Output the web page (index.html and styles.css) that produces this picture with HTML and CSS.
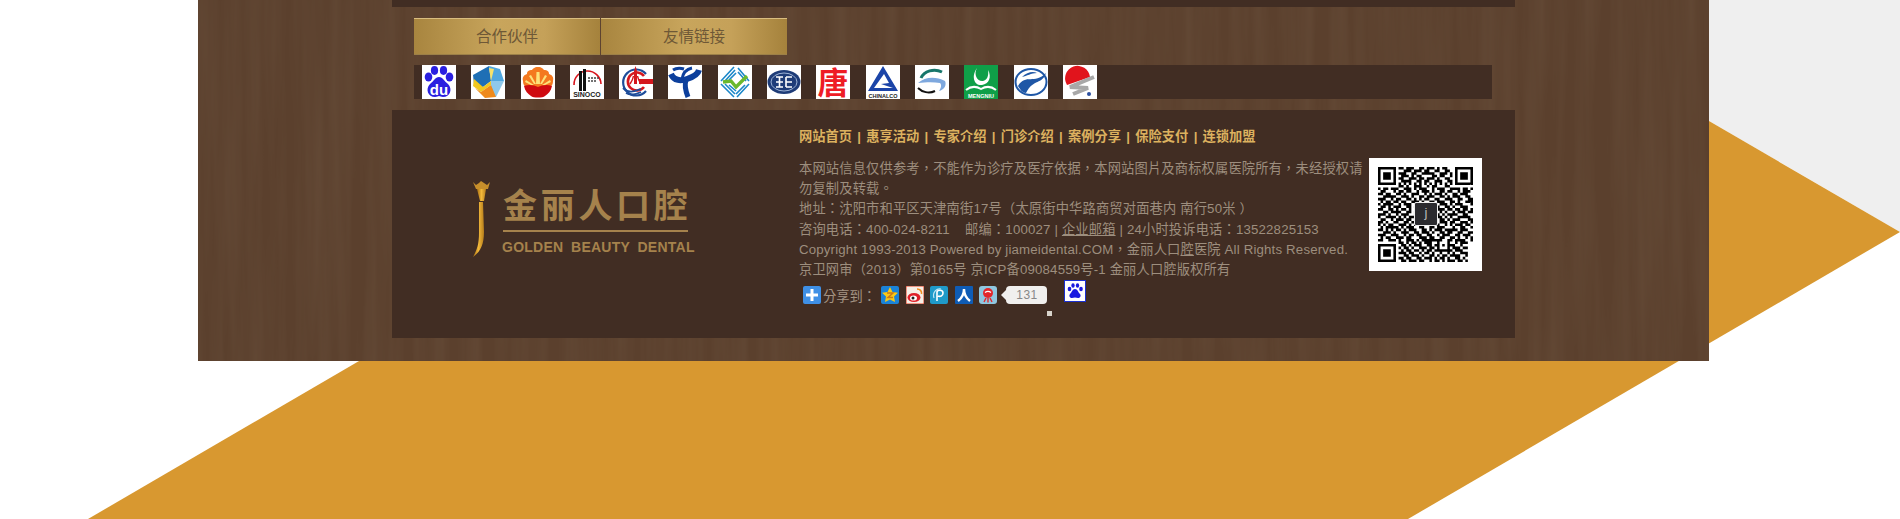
FILE: index.html
```html
<!DOCTYPE html>
<html lang="zh-CN">
<head>
    <meta charset="UTF-8">
    <meta name="viewport" content="width=device-width, initial-scale=1.0">
    <title>金丽人口腔</title>
    <link rel="stylesheet" href="styles.css">
</head>
<body>
    <div class="wood">
        <div class="top-strip"></div>

        <div class="tabs">
            <a class="tab">合作伙伴</a>
            <a class="tab">友情链接</a>
        </div>

        <div class="partners">
            <!-- baidu -->
            <svg class="logo" viewBox="0 0 34 34">
                <g fill="#2a1fe0">
                    <ellipse cx="6.500" cy="12" rx="3.800" ry="4.600"/>
                    <ellipse cx="12.500" cy="5.500" rx="3.600" ry="4.400"/>
                    <ellipse cx="21.500" cy="5.500" rx="3.600" ry="4.400"/>
                    <ellipse cx="27.500" cy="12" rx="3.800" ry="4.600"/>
                    <path d="M17 12c4 0 5 4 9 7 5 5 2 13-5 13-2 0-3-1-4-1s-2 1-4 1c-7 0-10-8-5-13 4-3 5-7 9-7z"/>
                </g>
                <text x="17" y="29.500" class="logo-du">du</text>
            </svg>
            <!-- cube -->
            <svg class="logo" viewBox="0 0 34 34">
                <path d="M2 10 18 1l2 15-8 6-9-3z" fill="#1e6fb5"/>
                <path d="M18 1l11 3 4 12-13 0z" fill="#4fa7e0"/>
                <path d="M20 16h13l-8 16-5-5z" fill="#8fc8ea"/>
                <path d="M3 14l9 8 8-6 0 4-10 7-8-6z" fill="#f2c81e"/>
                <path d="M4 23l6 4 10-7 5 12-11 1z" fill="#ef8a1c"/>
                <path d="M18 3l2 13 3-12z" fill="#f6e26a"/>
            </svg>
            <!-- petrochina -->
            <svg class="logo" viewBox="0 0 34 34">
                <path d="M17 2c-4 0-5 2-6 3-3 0-5 1-5 4-3 1-5 3-4 7 0 3 1 5 3 6h24c2-1 3-3 3-6 1-4-1-6-4-7 0-3-2-4-5-4-1-1-2-3-6-3z" fill="#f4791f"/>
                <path d="M15.500 7h3L19 19h-4zM8 11l2-1 5 9h-2zM26 11l-2-1-5 9h2zM4 17l1-2 8 5h-3zM30 17l-1-2-8 5h3z" fill="#fde27a"/>
                <path d="M3 21c5-2 10-1 14 1 4-2 9-3 14-1-1 5-4 8-7 10-2 2-12 2-14 0-3-2-6-5-7-10z" fill="#cf0a10"/>
            </svg>
            <!-- sinopec style -->
            <svg class="logo" viewBox="0 0 34 34">
                <path d="M4 20A13.500 13.500 0 1 1 31 19" fill="none" stroke="#d8141c" stroke-width="1.600"/>
                <path d="M9 6h3v21H9zM13 4h3v23h-3z" fill="#111"/>
                <path d="M18 13h11M18 16h9" stroke="#444" stroke-width="1.400" stroke-dasharray="2 1"/>
                <path d="M2 26h30v6H2z" fill="#fff"/>
                <text x="17" y="32" class="logo-tiny logo-tiny-big">SINOCO</text>
            </svg>
            <!-- cnooc -->
            <svg class="logo" viewBox="0 0 34 34">
                <path d="M27 9A13 13 0 1 0 27 26" fill="none" stroke="#1e4d9a" stroke-width="2.200"/>
                <path d="M25 11A9 9 0 1 0 25 22" fill="none" stroke="#d5181e" stroke-width="2.600"/>
                <path d="M15 19V6l1.500-5L18 6v13z" fill="#d5181e"/>
                <path d="M11 19c2-3 3-5 3.500-8M22 19c-2-3-3-5-3.500-8" fill="none" stroke="#d5181e" stroke-width="1.500"/>
                <path d="M4 23c6 6 12 3 18 1M7 28c5 3 11 1 15-1" fill="none" stroke="#1e4d9a" stroke-width="1.800"/>
                <rect x="20" y="14" width="14" height="5" fill="#d5181e"/>
            </svg>
            <!-- telecom -->
            <svg class="logo" viewBox="0 0 34 34" fill="none" stroke="#0c3f9c">
                <path d="M3 9c3 7 10 7 16 5 6-2 11-5 12-9" stroke-width="6"/>
                <path d="M24 3c-5 1-9 5-10 11" stroke-width="3"/>
                <path d="M18 15c-2 6 0 12 2 17" stroke-width="5"/>
                <path d="M5 5c3-2 8-2 11-1" stroke-width="3"/>
            </svg>
            <!-- mobile -->
            <svg class="logo" viewBox="0 0 34 34" fill="none">
                <g stroke="#1b87c9" stroke-width="1.600">
                    <path d="M3 16 16 2M7 16 17 5M11 15 18 8"/>
                    <path d="M20 3l11 13M20 7l8 9"/>
                    <path d="M3 19l13 13M7 19l10 10M11 20l7 6"/>
                    <path d="M31 19 19 32M27 20 18 29"/>
                </g>
                <path d="M5 17l8-1 5 6L29 11" stroke="#6ab82d" stroke-width="3.400"/>
            </svg>
            <!-- faw -->
            <svg class="logo" viewBox="0 0 34 34">
                <ellipse cx="17" cy="17" rx="16.500" ry="12" fill="#1e3c78"/>
                <ellipse cx="17" cy="17" rx="13" ry="9" fill="none" stroke="#9db3d6" stroke-width="1"/>
                <path d="M9 12h7M9 17h7M9 22h7M12.500 12v10M19 12v10M19 12h6M19 17h6M19 22h6" stroke="#fff" stroke-width="1.600"/>
            </svg>
            <!-- tang seal -->
            <svg class="logo" viewBox="0 0 34 34">
                <text x="17" y="29" class="logo-seal">唐</text>
            </svg>
            <!-- chinalco -->
            <svg class="logo" viewBox="0 0 34 34">
                <path d="M17 1 2 26h30zM18 9l5 9-8 1 12 4H8z" fill="#1b44a8" fill-rule="evenodd"/>
                <text x="17" y="32.500" class="logo-tiny">CHINALCO</text>
            </svg>
            <!-- swirl -->
            <svg class="logo" viewBox="0 0 34 34" fill="none">
                <path d="M6 13C9 6 19 3 27 7" stroke="#17766a" stroke-width="3"/>
                <path d="M3 18c7-6 17-7 27-2 2 4-1 9-6 10 2-3 3-6 1-8-6-1-13-1-22 0z" fill="#7ea8de"/>
                <path d="M3 23c4 4 11 6 17 3" stroke="#111" stroke-width="2"/>
            </svg>
            <!-- mengniu -->
            <svg class="logo logo-green" viewBox="0 0 34 34" fill="none">
                <path d="M13 3c-4 7 1 14 6 13 4-1 6-5 5-11 4 7 1 14-6 15-8 1-11-9-5-17z" fill="#fff"/>
                <path d="M2 25c5-4 10-4 15-1 5-3 10-3 15 1" stroke="#fff" stroke-width="2"/>
                <text x="17" y="32.500" class="logo-tiny logo-tiny-white">MENGNIU</text>
            </svg>
            <!-- blue swirl -->
            <svg class="logo" viewBox="0 0 34 34" fill="none">
                <ellipse cx="17" cy="17" rx="15.500" ry="13" stroke="#1f57a6" stroke-width="2"/>
                <path d="M4 21C12 8 20 20 32 8 28 20 20 13 12 28 8 28 6 24 4 21z" fill="#1f57a6"/>
                <path d="M8 12c5-5 11-6 15-4-6 0-10 3-15 4z" fill="#1f57a6"/>
            </svg>
            <!-- red sun -->
            <svg class="logo" viewBox="0 0 34 34" fill="none">
                <path d="M4 20A12.500 12.500 0 1 1 27 12z" fill="#e1141c"/>
                <path d="M31 12 7 22l18 1-15 6" stroke="#a8a8a8" stroke-width="4"/>
                <circle cx="26" cy="29" r="2" fill="#2b4fa0"/>
            </svg>
        </div>

        <div class="footer">
            <div class="brand">
                <svg class="brand-mark" viewBox="0 0 20 76">
                    <defs>
                        <linearGradient id="gold" x1="0" y1="0" x2="1" y2="0">
                            <stop offset="0" stop-color="#a86f12"/>
                            <stop offset="0.5" stop-color="#f2b83a"/>
                            <stop offset="1" stop-color="#b57d1c"/>
                        </linearGradient>
                    </defs>
                    <path d="M1 1l3 3 3-2 2-2 3 2 3 2 3-3-2 7H4z" fill="#c78f2b"/>
                    <path d="M5 8h9l-2 12h-4z" fill="url(#gold)"/>
                    <path d="M7 21h4l1 30c0 13-4 20-11 25 4-7 6-13 6-24z" fill="url(#gold)"/>
                </svg>
                <div class="brand-text">
                    <div class="brand-cn">金丽人口腔</div>
                    <div class="brand-en">GOLDEN BEAUTY DENTAL</div>
                </div>
            </div>

            <div class="info" lang="zh-Hant">
                <div class="info-nav">网站首页 | 惠享活动 | 专家介绍 | 门诊介绍 | 案例分享 | 保险支付 | 连锁加盟</div>
                <div class="info-text">
                    本网站信息仅供参考，不能作为诊疗及医疗依据，本网站图片及商标权属医院所有，未经授权请勿复制及转载。<br>
                    地址：沈阳市和平区天津南街17号（太原街中华路商贸对面巷内 南行50米 ）<br>
                    咨询电话：400-024-8211 &nbsp;&nbsp; 邮编：100027 | <u>企业邮箱</u> | 24小时投诉电话：13522825153<br>
                    Copyright 1993-2013 Powered by jiameidental.COM，金丽人口<u>腔</u>医院 All Rights Reserved.<br>
                    京卫网审（2013）第0165号 京ICP备09084559号-1 金丽人口腔版权所有
                </div>
                <div class="share">
                    <svg class="share-plus" viewBox="0 0 18 18">
                        <rect width="18" height="18" rx="2" fill="#3f90e6"/>
                        <path d="M9 3v12M3 9h12" stroke="#fff" stroke-width="3"/>
                    </svg>
                    <span class="share-label">分享到：</span>
                    <svg class="share-icon" viewBox="0 0 18 18">
                        <rect width="18" height="18" rx="2" fill="#1a83d8"/>
                        <path d="M9 1l2.500 5 5.500.8-4 3.800 1 5.400L9 13.500 4 16l1-5.400-4-3.800L6.500 6z" fill="#fbc914"/>
                        <path d="M6 7h6l-5 4.500h5" fill="none" stroke="#c9781a" stroke-width="1.500"/>
                    </svg>
                    <svg class="share-icon" viewBox="0 0 18 18">
                        <rect width="18" height="18" fill="#f6efe6" stroke="#e33b1e"/>
                        <ellipse cx="8" cy="11.500" rx="6.500" ry="4.500" fill="#df2029"/>
                        <ellipse cx="7.500" cy="12" rx="3.500" ry="2.600" fill="#fff"/>
                        <circle cx="7" cy="12" r="1.500" fill="#222"/>
                        <path d="M11 3c3 0 5 2 4.500 5" fill="none" stroke="#f08a1d" stroke-width="1.600"/>
                    </svg>
                    <svg class="share-icon" viewBox="0 0 18 18">
                        <rect width="18" height="18" rx="2" fill="#1f9ac9"/>
                        <path d="M7 15V6c0-2 6-3 6 1 0 3-3 4-5 3" fill="none" stroke="#fff" stroke-width="1.600"/>
                        <path d="M4 12C2 6 7 2 11 3" fill="none" stroke="#bfe6f5" stroke-width="1.200"/>
                    </svg>
                    <svg class="share-icon" viewBox="0 0 18 18">
                        <rect width="18" height="18" rx="1" fill="#0f5cb5"/>
                        <path d="M9 3c0 5-2 9-6 12M9 3c0 5 2 9 6 12" fill="none" stroke="#fff" stroke-width="2.400"/>
                    </svg>
                    <svg class="share-icon" viewBox="0 0 18 18">
                        <rect width="18" height="18" rx="3" fill="#8fc7e0"/>
                        <circle cx="9" cy="7" r="5" fill="#e3272b"/>
                        <path d="M6 6.500c2-1.500 4-1.500 6 0" stroke="#fff" stroke-width="1.400" fill="none"/>
                        <path d="M7 12l-2 4M9 12v4.500M11 12l2 4" stroke="#e3272b" stroke-width="1.400"/>
                    </svg>
                    <span class="share-count">131</span>
                    <svg class="share-paw" viewBox="0 0 22 22">
                        <rect x="0.500" y="0.500" width="21" height="21" fill="#fff" stroke="#1a2fd0"/>
                        <g fill="#1a1ae0">
                            <ellipse cx="5.500" cy="9" rx="1.800" ry="2.300"/>
                            <ellipse cx="9" cy="5.500" rx="1.700" ry="2.200"/>
                            <ellipse cx="13.500" cy="5.500" rx="1.700" ry="2.200"/>
                            <ellipse cx="17" cy="9" rx="1.800" ry="2.300"/>
                            <path d="M11 9c2.500 0 3 3 5 5 1.500 2 0 4-2 4-1 0-2-.5-3-.5s-2 .5-3 .5c-2 0-3.500-2-2-4 2-2 2.500-5 5-5z"/>
                        </g>
                    </svg>
                </div>
                <span class="tiny-mark"></span>
            </div>

            <div class="qr">
                <svg id="qr-code" class="qr-code" viewBox="0 0 37 37"></svg>
                <span class="qr-badge">j</span>
            </div>
        </div>
    </div>
    <script src="qr.js"></script>
</body>
</html>
```

FILE: styles.css
```css
html, body {
    margin: 0;
    height: 100%;
}
body {
    height: 519px;
    overflow: hidden;
    font-family: "Liberation Sans", "Noto Sans CJK SC", sans-serif;
    background: #fff url("data:image/svg+xml,%3Csvg xmlns='http://www.w3.org/2000/svg' width='1900' height='519'%3E%3Cpolygon points='1501,0 1900,0 1900,232' fill='%23efefef'/%3E%3Cpolygon points='1239,-152 1900,232 1408,519 88,519' fill='%23d89830'/%3E%3C/svg%3E") no-repeat 0 0;
}
.wood {
    margin-left: 198px;
    width: 1511px;
    height: 361px;
    box-sizing: border-box;
    padding: 0 194px;
    background: #5b402d url("data:image/svg+xml,%3Csvg xmlns='http://www.w3.org/2000/svg' width='1511' height='361'%3E%3Cfilter id='g' x='0' y='0' width='100%25' height='100%25'%3E%3CfeTurbulence type='fractalNoise' baseFrequency='0.06 0.003' numOctaves='4' seed='7'/%3E%3CfeColorMatrix values='0 0 0 0 0.2 0 0 0 0 0.13 0 0 0 0 0.08 0.4 0 0 0 -0.13'/%3E%3C/filter%3E%3Crect width='1511' height='361' filter='url(%23g)'/%3E%3C/svg%3E") no-repeat 0 0;
}
.top-strip {
    height: 7px;
    background: #412d23;
}

.tabs {
    display: flex;
    gap: 1px;
    margin: 11px 0 0 22px;
}
.tab {
    width: 186px;
    height: 37px;
    box-sizing: border-box;
    border-top: 1px solid #d9bd80;
    border-bottom: 1px solid #9c8048;
    line-height: 35px;
    text-align: center;
    font-size: 15.5px;
    color: #6e5836;
    background: linear-gradient(90deg, #a8853f 0%, #c8a55c 45%, #c5a159 70%, #a5823c 100%);
}

.partners {
    display: flex;
    gap: 15.3px;
    height: 34px;
    margin: 10px 23px 0 22px;
    padding-left: 8px;
    background: #412d23;
}
.logo {
    flex: none;
    width: 34px;
    height: 34px;
    background: #fff;
}
.logo-green {
    background: #0f9f48;
}
.logo-du {
    font-size: 15px;
    font-weight: bold;
    fill: #fff;
    text-anchor: middle;
}
.logo-seal {
    font-size: 31px;
    font-weight: bold;
    fill: #ee1c25;
    text-anchor: middle;
}
.logo-tiny {
    font-size: 5.5px;
    font-weight: bold;
    fill: #222;
    text-anchor: middle;
}
.logo-tiny-big {
    font-size: 7px;
}
.logo-tiny-white {
    fill: #fff;
}

.footer {
    display: grid;
    grid-template-columns: 407px 570px 113px;
    height: 228px;
    margin-top: 11px;
    background: #412d23;
}
.brand {
    display: flex;
    gap: 10px;
    padding: 71px 0 0 80px;
}
.brand-mark {
    flex: none;
    width: 20px;
    height: 76px;
}
.brand-cn {
    width: 185px;
    height: 44px;
    margin: 5px 0 0 1px;
    border-bottom: 2px solid #a5824c;
    font-size: 34px;
    line-height: 40px;
    font-weight: bold;
    letter-spacing: 3.7px;
    white-space: nowrap;
    color: #a5824c;
}
.brand-en {
    margin-top: 7px;
    font-size: 14px;
    line-height: 16px;
    font-weight: bold;
    word-spacing: 3.5px;
    letter-spacing: 0.25px;
    white-space: nowrap;
    color: #a5824c;
}

.info {
    position: relative;
    padding-top: 17px;
    font-family: "Liberation Sans", "Noto Sans CJK TC", sans-serif;
    font-size: 13.25px;
    color: #9d8e7e;
}
.info-nav {
    line-height: 20px;
    font-weight: bold;
    word-spacing: 1.6px;
    color: #dcb15f;
    white-space: nowrap;
}
.info-text {
    margin-top: 12px;
    width: 568px;
    line-height: 20.2px;
    letter-spacing: 0.17px;
}
.share {
    display: flex;
    align-items: center;
    height: 24px;
    margin: 1px 0 0 4px;
}
.share-plus {
    width: 18px;
    height: 18px;
    margin-top: 4px;
}
.share-label {
    width: 58px;
    margin-top: 4px;
    padding-left: 2px;
    color: #a49483;
}
.share-icon {
    flex: none;
    width: 18px;
    height: 18px;
    margin: 4px 6.500px 0 0;
}
.share-count {
    position: relative;
    width: 39px;
    height: 18px;
    margin: 4px 0 0 2px;
    padding-left: 2px;
    border-radius: 4px;
    background: #f1f0ee;
    color: #888;
    font-size: 12px;
    line-height: 18px;
    text-align: center;
    letter-spacing: 0.5px;
}
.share-count::before {
    content: "";
    position: absolute;
    left: -5px;
    top: 4px;
    border: 5px solid transparent;
    border-left: 0;
    border-right-color: #f1f0ee;
}
.share-paw {
    width: 22px;
    height: 22px;
    margin: -4px 0 0 17px;
}
.tiny-mark {
    position: absolute;
    left: 248px;
    top: 201px;
    width: 5px;
    height: 5px;
    background: #d8d4cc;
}

.qr {
    position: relative;
    align-self: start;
    display: flex;
    box-sizing: border-box;
    width: 113px;
    height: 113px;
    margin-top: 48px;
    padding: 9px;
    background: #fff;
}
.qr-code {
    width: 95px;
    height: 95px;
}
.qr-badge {
    position: absolute;
    left: 45px;
    top: 44px;
    width: 22px;
    height: 22px;
    border: 1px solid #eee;
    border-radius: 2px;
    background: #2b2b2f;
    color: #bbb;
    font-size: 13px;
    line-height: 20px;
    text-align: center;
}
```

FILE: qr.js
```js
// QR modules, row by row
const rows = [
    '1111111 0 110111001101110101100 0 1111111',
    '1000001 0 001110111011001100110 0 1000001',
    '1011101 0 111001100111110011101 0 1011101',
    '1011101 0 011101011000011011001 0 1011101',
    '1011101 0 110011101101110100110 0 1011101',
    '1000001 0 011110011011001110011 0 1000001',
    '1111111 0 101010101010101010101 0 1111111',
    '0000000 0 110100111001011000110 0 0000000',
    '1011011 1 001110101110010111001 1 1101101',
    '0110001011011001011101001101100101110',
    '1101100110100111001010111010011011100',
    '0011111001110100110111001101011100110',
    '1110010110011010101100110011100110011',
    '0101101101100111010011011100110100111',
    '1011110010111001100100101110101110001',
    '0110101110011010111000110011010011100',
    '1100110101101001010110011101101101101',
    '0011011110011011100100101010010111011',
    '1110100101110010101100110101111001100',
    '1001111010101101010010011010100111110',
    '0110010111011011001100101101011100011',
    '1101001100110110100111001110110011101',
    '1010110011101011011100110010101110110',
    '0101111101011100110011011100010011001',
    '1101010110101110011010111011111011100',
    '0011101001110011011101001101100110011',
    '1110011100101101100110010111001101110',
    '0101100111011000111011001100110100101',
    '1100111010011101011111111001101111001',
    '0000000 0 110101101011100 10001 0010111',
    '1111111 0 011010111001101 10101 1100100',
    '1000001 0 101101001110110 10001 0111011',
    '1011101 0 010110110101101 11111 1011100',
    '1011101 0 111011001011010 01001 0100111',
    '1011101 0 001101110100110 10110 1111001',
    '1000001 0 110110011011101 01101 0011010',
    '1111111 0 011011101100101 10101 1101101'
];

let d = '';
rows.forEach((row, y) => {
    row.replace(/ /g, '').split('').forEach((cell, x) => {
        if (cell === '1') d += `M${x} ${y}h1v1h-1z`;
    });
});

const path = document.createElementNS('http://www.w3.org/2000/svg', 'path');
path.setAttribute('d', d);
document.getElementById('qr-code').appendChild(path);
```
